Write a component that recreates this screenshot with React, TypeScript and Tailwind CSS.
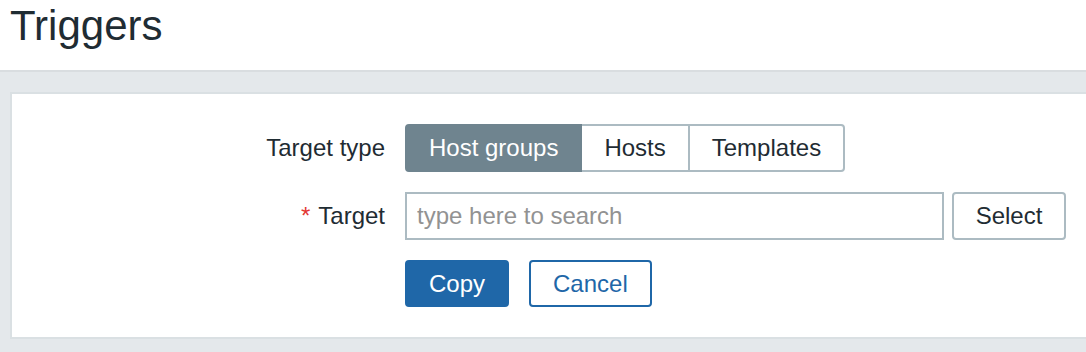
import React, { useState } from 'react';

type TargetType = 'groups' | 'hosts' | 'templates';

const targetTypes: { id: TargetType; label: string }[] = [
  { id: 'groups', label: 'Host groups' },
  { id: 'hosts', label: 'Hosts' },
  { id: 'templates', label: 'Templates' },
];

const App: React.FC = () => {
  const [targetType, setTargetType] = useState<TargetType>('groups');
  const [query, setQuery] = useState('');

  return (
    <div className="min-h-screen bg-[#e4e8eb] font-['Liberation_Sans',Arial,sans-serif] text-[#1f2c33]">
      <header className="h-[72px] bg-white border-b-2 border-[#d9dde0] px-[10px] pt-[5px]">
        <h1 className="text-[42px] leading-none">Triggers</h1>
      </header>

      <div className="pt-[20px] pl-[10px] pb-[13px]">
        <form
          onSubmit={(e) => e.preventDefault()}
          className="bg-white border-y-2 border-l-2 border-[#dae0e3] py-[30px] grid grid-cols-[373px_auto] gap-x-[20px] gap-y-[20px] text-[24px]"
        >
          <label className="flex items-center justify-end h-[48px]">Target type</label>
          <div className="flex h-[48px]">
            {targetTypes.map((t, i) => {
              const active = t.id === targetType;
              return (
                <button
                  key={t.id}
                  type="button"
                  onClick={() => setTargetType(t.id)}
                  className={
                    'h-full px-[22px] border-2 leading-none ' +
                    (i === 0 ? 'rounded-l-[4px] ' : '-ml-[2px] ') +
                    (i === targetTypes.length - 1 ? 'rounded-r-[4px] ' : '') +
                    (active
                      ? 'bg-[#6f848f] border-[#6f848f] text-white relative'
                      : 'bg-white border-[#acbbc2] text-[#1f2c33]')
                  }
                >
                  {t.label}
                </button>
              );
            })}
          </div>

          <label className="flex items-center justify-end h-[48px]">
            <span className="text-[#e33734] mr-[8px]">*</span>Target
          </label>
          <div className="flex items-center gap-[8px] h-[48px]">
            <input
              type="text"
              value={query}
              onChange={(e) => setQuery(e.target.value)}
              placeholder="type here to search"
              className="w-[539px] h-full border-2 border-[#acbbc2] pl-[10px] text-[24px] placeholder-[#929292] outline-none"
            />
            <button
              type="button"
              className="h-full w-[114px] border-2 border-[#acbbc2] rounded-[4px] bg-white"
            >
              Select
            </button>
          </div>

          <div />
          <div className="flex gap-[20px] h-[47px]">
            <button
              type="submit"
              className="h-full px-[22px] border-2 border-[#1f67a8] bg-[#1f67a8] text-white rounded-[4px]"
            >
              Copy
            </button>
            <button
              type="button"
              className="h-full px-[22px] border-2 border-[#1f67a8] bg-white text-[#1f67a8] rounded-[4px]"
            >
              Cancel
            </button>
          </div>
        </form>
      </div>
    </div>
  );
};

export default App;
